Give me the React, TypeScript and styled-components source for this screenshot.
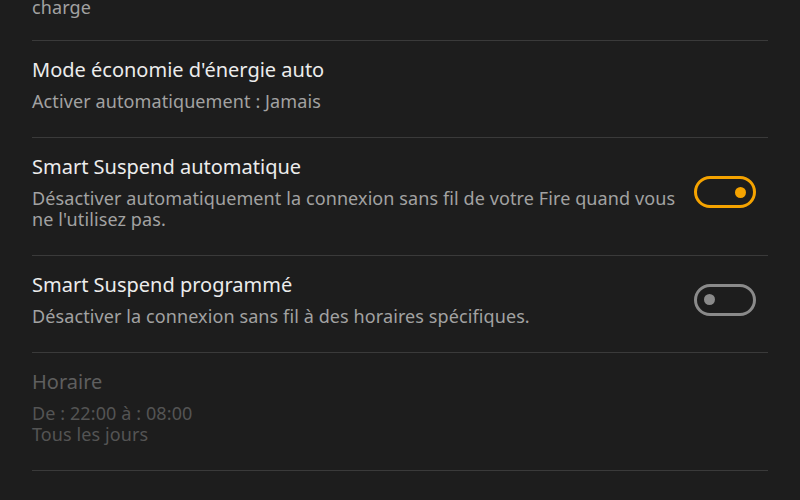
import { createGlobalStyle, styled } from "styled-components";

const GlobalStyle = createGlobalStyle`
  html, body {
    margin: 0;
    padding: 0;
    background: #1d1d1d;
    overflow: hidden;
  }

  body {
    font-family: "Noto Sans", "Open Sans", sans-serif;
  }
`;

type Setting = {
  title?: string;
  lines: string[];
  toggle?: "on" | "off";
  disabled?: boolean;
};

const settings: Setting[] = [
  { lines: ["charge"] },
  { title: "Mode économie d'énergie auto", lines: ["Activer automatiquement : Jamais"] },
  {
    title: "Smart Suspend automatique",
    lines: ["Désactiver automatiquement la connexion sans fil de votre Fire quand vous ne l'utilisez pas."],
    toggle: "on",
  },
  {
    title: "Smart Suspend programmé",
    lines: ["Désactiver la connexion sans fil à des horaires spécifiques."],
    toggle: "off",
  },
  { title: "Horaire", lines: ["De : 22:00 à : 08:00", "Tous les jours"], disabled: true },
];

const App = () => {
  return (
    <>
      <GlobalStyle />
      <SettingsList>
        {settings.map((item, i) => (
          <SettingRow key={i} $partial={!item.title}>
            <SettingInfo>
              {item.title && <SettingTitle $disabled={item.disabled}>{item.title}</SettingTitle>}
              {item.lines.map((line) => (
                <SettingDesc key={line} $disabled={item.disabled}>
                  {line}
                </SettingDesc>
              ))}
            </SettingInfo>
            {item.toggle && (
              <Toggle $on={item.toggle === "on"}>
                <ToggleKnob $on={item.toggle === "on"} />
              </Toggle>
            )}
          </SettingRow>
        ))}
      </SettingsList>
    </>
  );
};

export default App;

// list is scrolled: only the last line of the previous row shows
const SettingsList = styled.div`
  margin-top: -3.5px;
  padding: 0 32px;
`;

const SettingRow = styled.div<{ $partial?: boolean }>`
  display: flex;
  align-items: center;
  gap: 18px;

  padding: ${({ $partial }) => ($partial ? "0 0 22px" : "16.5px 0 24.6px")};
  border-bottom: 1px solid #3a3a3a;
`;

const SettingInfo = styled.div`
  flex: 1;
  min-width: 0;

  display: flex;
  flex-direction: column;
`;

const SettingTitle = styled.p<{ $disabled?: boolean }>`
  margin: 0 0 8px;

  font-size: 20px;
  line-height: 26px;
  color: ${({ $disabled }) => ($disabled ? "#5f5f5f" : "#ececec")};
`;

const SettingDesc = styled.p<{ $disabled?: boolean }>`
  margin: 0;

  font-size: 18px;
  line-height: 21px;
  letter-spacing: 0.1px;
  color: ${({ $disabled }) => ($disabled ? "#545454" : "#a2a2a2")};
`;

const Toggle = styled.div<{ $on: boolean }>`
  flex: none;
  box-sizing: border-box;
  width: 62px;
  height: 32px;
  margin-right: 12px;

  display: flex;
  align-items: center;
  justify-content: ${({ $on }) => ($on ? "flex-end" : "flex-start")};
  padding: 0 7px;

  border: 3px solid ${({ $on }) => ($on ? "#f5a300" : "#8a8a8a")};
  border-radius: 16px;
`;

const ToggleKnob = styled.span<{ $on: boolean }>`
  width: 11px;
  height: 11px;

  border-radius: 50%;
  background: ${({ $on }) => ($on ? "#f5a300" : "#8a8a8a")};
`;
